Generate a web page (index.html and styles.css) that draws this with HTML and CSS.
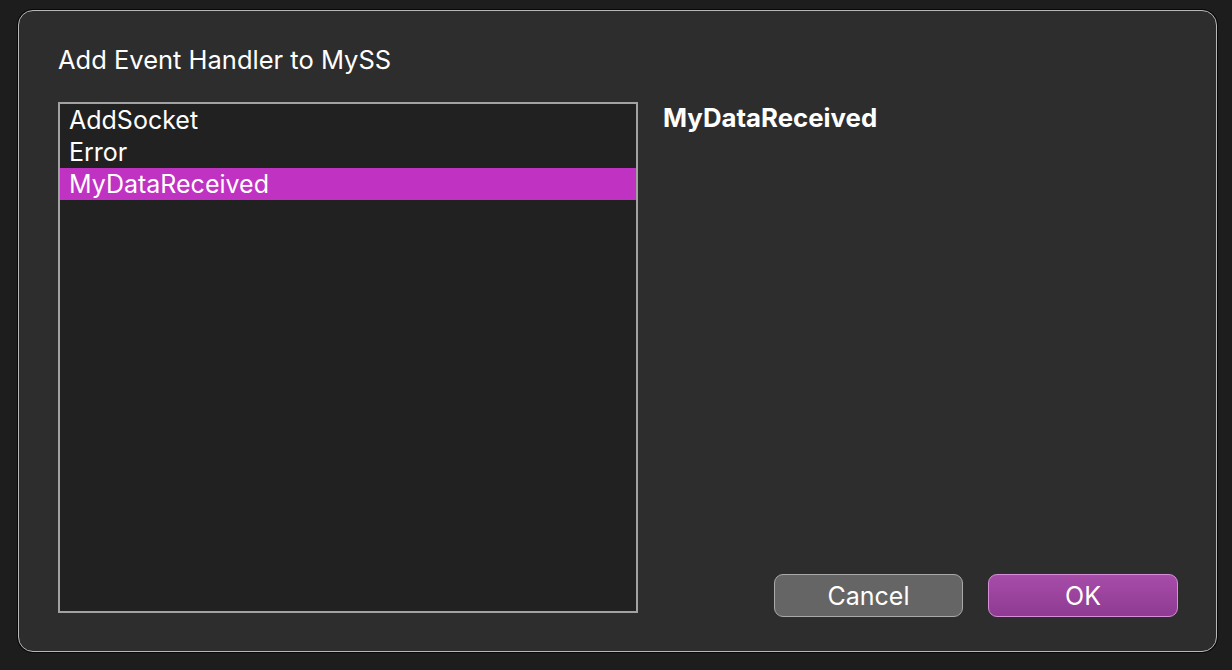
FILE: index.html
```html
<!DOCTYPE html>
<html lang="en">
<head>
    <meta charset="UTF-8">
    <title>Add Event Handler</title>
    <link rel="stylesheet" href="styles.css">
</head>
<body>
    <div class="dialog">
        <h1 class="dialog-title">Add Event Handler to MySS</h1>

        <div class="dialog-body">
            <ul class="event-list">
                <li class="event-item">AddSocket</li>
                <li class="event-item">Error</li>
                <li class="event-item selected">MyDataReceived</li>
            </ul>

            <div class="details">
                <h2 class="details-name">MyDataReceived</h2>
                <div class="buttons">
                    <button class="btn btn-cancel">Cancel</button>
                    <button class="btn btn-ok">OK</button>
                </div>
            </div>
        </div>
    </div>
</body>
</html>
```

FILE: styles.css
```css
body {
    margin: 0;
    padding: 10px 15px 0 18px;
    height: 670px;
    box-sizing: border-box;
    background-color: #1d1d1d;
    font-family: Inter, "Liberation Sans", Arial, sans-serif;
    color: #fff;
    overflow: hidden;
}
.dialog {
    height: 642px;
    box-sizing: border-box;
    border: 1px solid #b8b8b8;
    border-radius: 15px;
    background-color: #2d2d2d;
    box-shadow: 0 0 0 1px #080808;
    padding: 0 38px 34px 39px;
    display: flex;
    flex-direction: column;
}
.dialog-title {
    font-size: 25.5px;
    font-weight: 400;
    line-height: 32px;
    margin: 33px 0 0 0;
}
.dialog-body {
    flex: 1;
    display: flex;
    gap: 25px;
    margin-top: 26px;
}
.event-list {
    list-style: none;
    margin: 0 0 4px 0;
    padding: 0;
    width: 580px;
    box-sizing: border-box;
    border: 2px solid #a2a2a2;
    background-color: #212121;
}
.event-item {
    font-size: 25px;
    line-height: 32px;
    padding-left: 9px;
}
.event-item.selected {
    background-color: #c032c2;
}
.details {
    flex: 1;
    display: flex;
    flex-direction: column;
}
.details-name {
    font-size: 25.8px;
    font-weight: 700;
    line-height: 32px;
    margin: 0;
}
.buttons {
    margin-top: auto;
    display: flex;
    justify-content: flex-end;
    gap: 25px;
}
.btn {
    width: 190px;
    height: 43px;
    border-radius: 9px;
    font-family: inherit;
    font-size: 25px;
    color: #fff;
    cursor: pointer;
}
.btn-cancel {
    width: 189px;
    background-color: #656565;
    border: 1px solid #a9a9a9;
}
.btn-ok {
    background: linear-gradient(#a64ca9, #8f3b92);
    border: 1px solid #d78dd9;
}
```
